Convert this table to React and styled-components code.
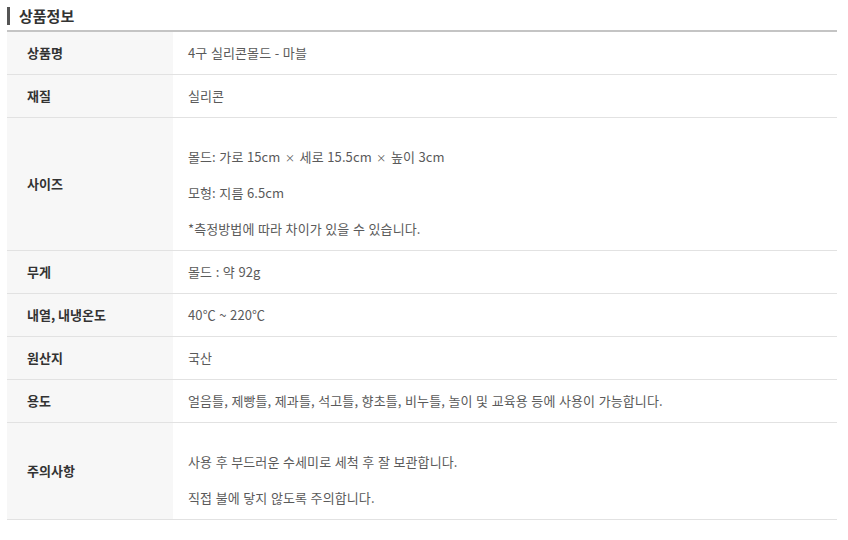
import React from "react";
import styled, { createGlobalStyle } from "styled-components";

const GlobalStyle = createGlobalStyle`
  body {
    margin: 0;
    background: #fff;
    font-family: "Noto Sans CJK KR", "Noto Sans", sans-serif;
  }
`;

const Wrapper = styled.div`
  padding: 6px 11px 0 7px;
`;

const Title = styled.h3`
  display: flex;
  align-items: center;
  gap: 9px;
  margin: 0;
  height: 19px;
  font-size: 15px;
  font-weight: 700;
  color: #333;
  line-height: 19px;

  &::before {
    content: "";
    display: block;
    width: 3px;
    height: 18px;
    background: #555;
  }
`;

const Table = styled.table`
  width: 100%;
  margin-top: 5px;
  border-collapse: collapse;
  border-top: 2px solid #c4c4c4;
  font-size: 13px;
  line-height: 18px;
`;

const Row = styled.tr`
  border-bottom: 1px solid #e2e2e2;
`;

const HeadCell = styled.th`
  width: 146px;
  padding: 12px 0 12px 20px;
  background: #f7f7f7;
  text-align: left;
  font-weight: 700;
  color: #333;
  vertical-align: middle;
`;

const ValueCell = styled.td`
  padding: 12px 15px;
  color: #5a5a5a;
  vertical-align: middle;
  letter-spacing: 0.1px;
  word-spacing: 0.5px;
`;

const Line = styled.div`
  height: 18px;
  margin-top: ${(p) => (p.$spaced ? "18px" : "0")};
`;

const Times = styled.span`
  font-size: 10px;
  line-height: 1;
  padding: 0 1px;
`;

const rows = [
  { label: "상품명", lines: ["4구 실리콘몰드 - 마블"] },
  { label: "재질", lines: ["실리콘"] },
  {
    label: "사이즈",
    spaced: true,
    lines: [
      <>
        몰드: 가로 15cm <Times>×</Times> 세로 15.5cm <Times>×</Times> 높이 3cm
      </>,
      "모형: 지름 6.5cm",
      "*측정방법에 따라 차이가 있을 수 있습니다.",
    ],
  },
  { label: "무게", lines: ["몰드 : 약 92g"] },
  { label: "내열, 내냉온도", lines: ["40℃ ~ 220℃"] },
  { label: "원산지", lines: ["국산"] },
  {
    label: "용도",
    lines: ["얼음틀, 제빵틀, 제과틀, 석고틀, 향초틀, 비누틀, 놀이 및 교육용 등에 사용이 가능합니다."],
  },
  {
    label: "주의사항",
    spaced: true,
    lines: ["사용 후 부드러운 수세미로 세척 후 잘 보관합니다.", "직접 불에 닿지 않도록 주의합니다."],
  },
];

export default function App() {
  return (
    <Wrapper>
      <GlobalStyle />
      <Title>상품정보</Title>
      <Table>
        <tbody>
          {rows.map((row) => (
            <Row key={row.label}>
              <HeadCell>{row.label}</HeadCell>
              <ValueCell>
                {row.lines.map((line, i) => (
                  <Line key={i} $spaced={row.spaced}>
                    {line}
                  </Line>
                ))}
              </ValueCell>
            </Row>
          ))}
        </tbody>
      </Table>
    </Wrapper>
  );
}
